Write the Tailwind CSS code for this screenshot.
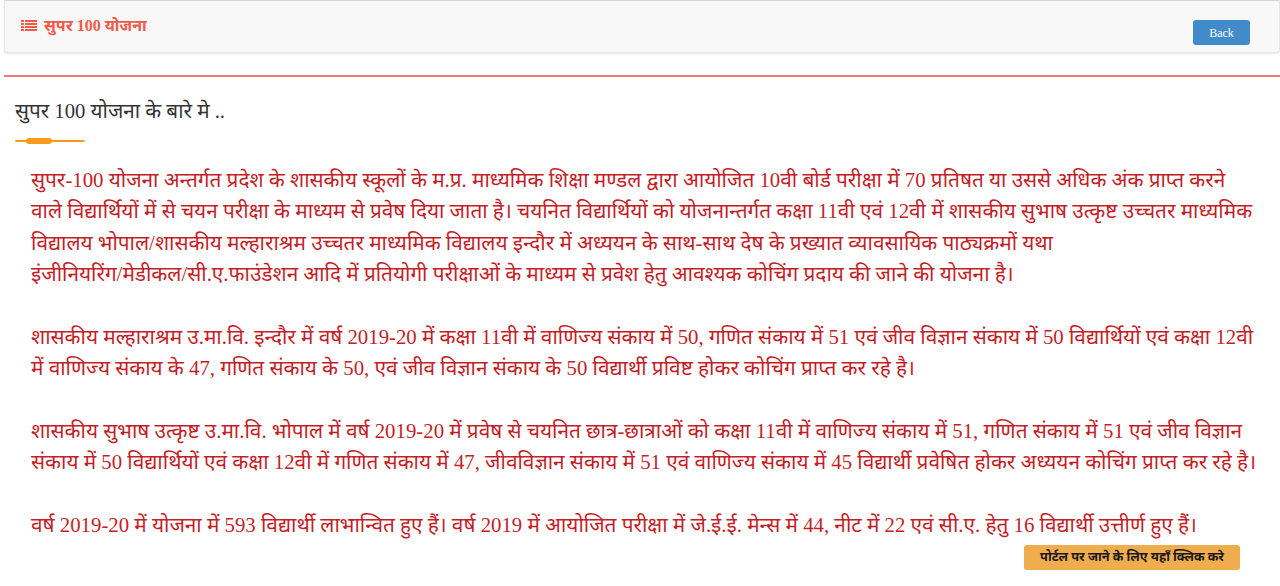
<!DOCTYPE html>
<html lang="hi">
<head>
<meta charset="utf-8">
<script src="https://cdn.jsdelivr.net/npm/@tailwindcss/browser@4"></script>
</head>
<body class="bg-white h-[586px] overflow-hidden font-['Liberation_Serif','Noto_Sans_Devanagari','Noto_Serif_Devanagari',serif]">
<div class="h-[586px] flex flex-col pl-1">
  <header class="h-[53px] shrink-0 bg-[#f8f8f8] border border-[#e7e7e7] rounded-b border-t-[#d5d5d5] shadow-[0_1px_2px_rgba(0,0,0,0.1)] flex items-start justify-between pl-4 pr-[29px]">
    <h1 class="flex items-center gap-[7px] mt-[13px] text-[#f4594a] text-[16px] leading-[24px] font-bold">
      <svg class="w-[16px] h-[14px]" viewBox="0 0 16 14" fill="#f4594a"><rect x="0" y="1" width="3" height="2"/><rect x="4" y="1" width="12" height="2"/><rect x="0" y="4" width="3" height="2"/><rect x="4" y="4" width="12" height="2"/><rect x="0" y="7" width="3" height="2"/><rect x="4" y="7" width="12" height="2"/><rect x="0" y="10" width="3" height="2"/><rect x="4" y="10" width="12" height="2"/></svg>
      <span>सुपर 100 योजना</span>
    </h1>
    <button class="mt-[19px] w-[57px] h-[25px] bg-[#428bca] text-white text-[12px] rounded-[3px]">Back</button>
  </header>
  <main class="mt-[22px] border-t-2 border-t-[#f0787a] pl-[11px] pr-[10px]">
    <h2 class="mt-[20px] text-[#333] text-[20.7px] leading-[28px]">सुपर 100 योजना के बारे मे ..</h2>
    <div class="relative mt-[15px] w-[70px] h-[2px] bg-[#fb9a1e] rounded-full">
      <div class="absolute left-[11px] top-[-2px] w-[26px] h-[6px] rounded-full bg-[#fb9a1e]"></div>
    </div>
    <div class="mt-[22px] pl-4 text-[#c41e28] text-[20.8px] leading-[31.36px] whitespace-nowrap">
      <p>सुपर-100 योजना अन्तर्गत प्रदेश के शासकीय स्कूलों के म.प्र. माध्यमिक शिक्षा मण्डल द्वारा आयोजित 10वी बोर्ड परीक्षा में 70 प्रतिषत या उससे अधिक अंक प्राप्त करने<br>वाले विद्यार्थियों में से चयन परीक्षा के माध्यम से प्रवेष दिया जाता है। चयनित विद्यार्थियों को योजनान्तर्गत कक्षा 11वी एवं 12वी में शासकीय सुभाष उत्कृष्ट उच्चतर माध्यमिक<br>विद्यालय भोपाल/शासकीय मल्हाराश्रम उच्चतर माध्यमिक विद्यालय इन्दौर में अध्ययन के साथ-साथ देष के प्रख्यात व्यावसायिक पाठ्यक्रमों यथा<br>इंजीनियरिंग/मेडीकल/सी.ए.फाउंडेशन आदि में प्रतियोगी परीक्षाओं के माध्यम से प्रवेश हेतु आवश्यक कोचिंग प्रदाय की जाने की योजना है।</p>
      <p class="mt-[31.36px]">शासकीय मल्हाराश्रम उ.मा.वि. इन्दौर में वर्ष 2019-20 में कक्षा 11वी में वाणिज्य संकाय में 50, गणित संकाय में 51 एवं जीव विज्ञान संकाय में 50 विद्यार्थियों एवं कक्षा 12वी<br>में वाणिज्य संकाय के 47, गणित संकाय के 50, एवं जीव विज्ञान संकाय के 50 विद्यार्थी प्रविष्ट होकर कोचिंग प्राप्त कर रहे है।</p>
      <p class="mt-[31.36px]">शासकीय सुभाष उत्कृष्ट उ.मा.वि. भोपाल में वर्ष 2019-20 में प्रवेष से चयनित छात्र-छात्राओं को कक्षा 11वी में वाणिज्य संकाय में 51, गणित संकाय में 51 एवं जीव विज्ञान<br>संकाय में 50 विद्यार्थियों एवं कक्षा 12वी में गणित संकाय में 47, जीवविज्ञान संकाय में 51 एवं वाणिज्य संकाय में 45 विद्यार्थी प्रवेषित होकर अध्ययन कोचिंग प्राप्त कर रहे है।</p>
      <p class="mt-[31.36px]">वर्ष 2019-20 में योजना में 593 विद्यार्थी लाभान्वित हुए हैं। वर्ष 2019 में आयोजित परीक्षा में जे.ई.ई. मेन्स में 44, नीट में 22 एवं सी.ए. हेतु 16 विद्यार्थी उत्तीर्ण हुए हैं।</p>
    </div>
    <div class="flex justify-end mt-[5px] pr-[30px]">
      <a class="w-[216px] h-[25px] flex items-center justify-center bg-[#f0ad4e] rounded-[3px] text-[#1a1a1a] text-[12.8px] font-bold">पोर्टल पर जाने के लिए यहाँ क्लिक करे</a>
    </div>
  </main>
</div>
</body>
</html>
